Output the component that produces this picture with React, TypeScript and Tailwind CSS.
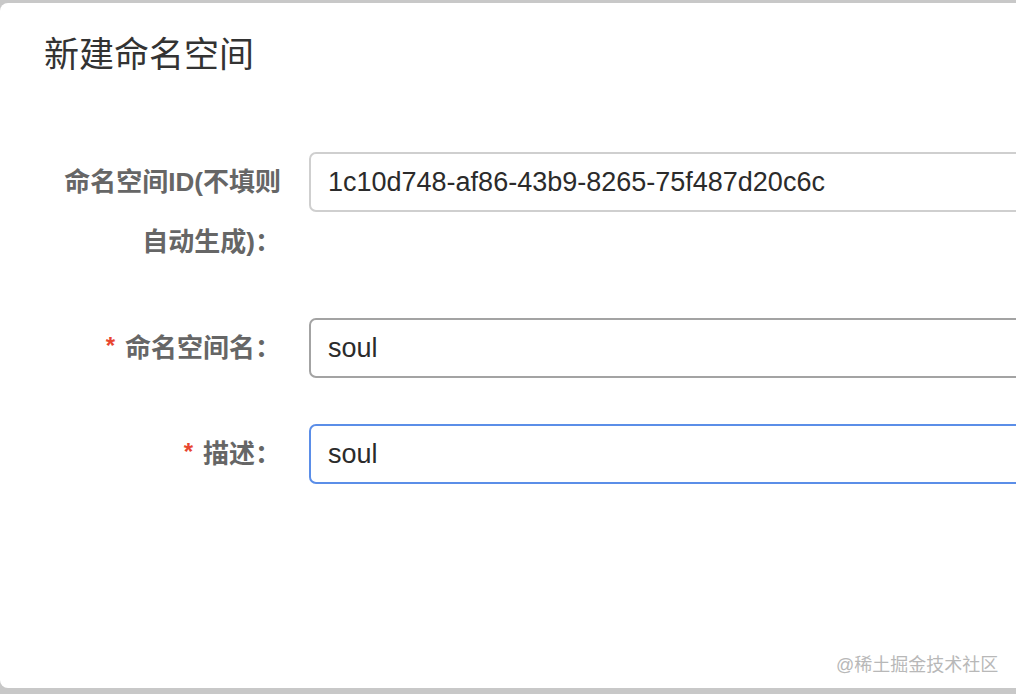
const FONT = '"Liberation Sans", "Noto Sans CJK SC", sans-serif';

type Field = {
  label: string[];
  value: string;
  required?: boolean;
  border: string;
  gap: string;
};

const fields: Field[] = [
  {
    label: ["命名空间ID(不填则", "自动生成)："],
    value: "1c10d748-af86-43b9-8265-75f487d20c6c",
    border: "border-[#cfcfcf]",
    gap: "mb-[46px]",
  },
  {
    label: ["命名空间名："],
    value: "soul",
    required: true,
    border: "border-[#a3a3a3]",
    gap: "mb-[46px]",
  },
  {
    label: ["描述："],
    value: "soul",
    required: true,
    border: "border-[#5b8ee8]",
    gap: "",
  },
];

function FormRow({ field }: { field: Field }) {
  return (
    <div className={`flex items-start gap-[28px] ${field.gap}`}>
      <div className="w-[281px] shrink-0 text-right text-[26px] font-bold leading-[60px] text-[#666]">
        {field.label.map((line, i) => (
          <div key={i} className="h-[60px]">
            {field.required && i === 0 && (
              <span className="mr-[10px] inline-block align-top text-[24px] leading-[56px] text-[#e8462f]">
                *
              </span>
            )}
            {line}
          </div>
        ))}
      </div>
      <div
        className={`flex h-[60px] flex-1 items-center rounded-[7px] border-2 bg-white pl-[17px] text-[27px] text-[#2b2b2b] ${field.border}`}
      >
        {field.value}
      </div>
    </div>
  );
}

export default function App() {
  return (
    <div
      className="h-[694px] w-[1016px] overflow-hidden bg-[#c8c8c8] pt-[3px]"
      style={{ fontFamily: FONT }}
    >
      <div className="relative h-[685px] w-[1100px] rounded-[8px] bg-white">
        <div className="px-[44px] pt-[32px] text-[35px] leading-[40px] text-[#333]">
          新建命名空间
        </div>
        <div className="mt-[77px]">
          {fields.map((f, i) => (
            <FormRow key={i} field={f} />
          ))}
        </div>
        <div className="absolute left-[836px] top-[649px] text-[18px] leading-[26px] text-[#b8b8b8]">
          @稀土掘金技术社区
        </div>
      </div>
    </div>
  );
}
